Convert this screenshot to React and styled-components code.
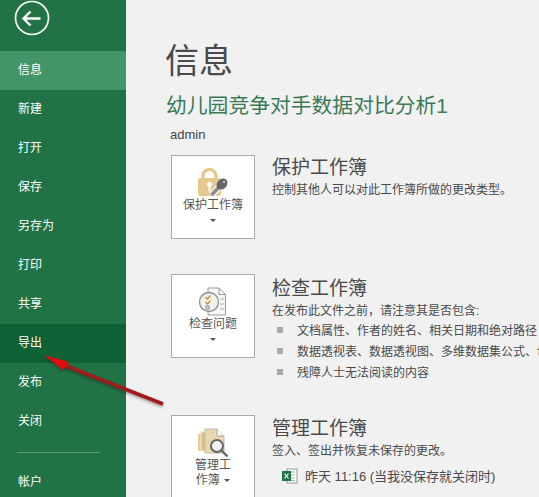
import React from 'react';
import styled, { createGlobalStyle } from 'styled-components';

const navItems = ['信息', '新建', '打开', '保存', '另存为', '打印', '共享', '导出', '发布', '关闭'];

const inspectItems = [
	'文档属性、作者的姓名、相关日期和绝对路径',
	'数据透视表、数据透视图、多维数据集公式、切片器',
	'残障人士无法阅读的内容',
];

function LockIcon() {
	return (
		<svg width="32" height="30" viewBox="0 0 32 30">
			<path d="M6 11V8a6.500 6.500 0 0 1 13 0v3" fill="none" stroke="#e3c588" strokeWidth="3.200" />
			<rect x="1" y="10" width="23" height="18" rx="2" fill="#e6c98f" />
			<circle cx="12.500" cy="16.500" r="2.400" fill="#fff" />
			<rect x="11.500" y="16.500" width="2" height="7" fill="#fff" />
			<path d="M23 18L14.500 27" stroke="#f4f4f4" strokeWidth="6.500" />
			<path d="M23 18L14.500 27" stroke="#8c8c8c" strokeWidth="3.600" />
			<ellipse cx="25" cy="16" rx="6" ry="4.800" transform="rotate(-45 25 16)" fill="#666" />
			<circle cx="27" cy="14" r="1" fill="#ddd" />
		</svg>
	);
}

function InspectIcon() {
	return (
		<svg width="30" height="30" viewBox="0 0 30 30">
			<path d="M10 1h11l6.500 6.500V28H10z" fill="#f7f7f7" stroke="#999" />
			<path d="M21 1v6.500h6.500" fill="none" stroke="#999" />
			<path d="M22 12h4M22 17h4M22 22h4" stroke="#aaa" />
			<circle cx="11" cy="15" r="9.500" fill="#f3f1ec" stroke="#8d8d8d" strokeWidth="1.300" />
			<path d="M7.500 10l2 2 3-3.500M7.500 15l2 2 3-3.500" fill="none" stroke="#c9893a" strokeWidth="1.200" />
			<rect x="8" y="19" width="3" height="3" fill="none" stroke="#888" />
		</svg>
	);
}

function ManageIcon() {
	return (
		<svg width="32" height="30" viewBox="0 0 32 30">
			<rect x="1" y="6" width="14" height="17" fill="#e6cf9f" />
			<rect x="4" y="4" width="14" height="19" fill="#dcc083" stroke="#f1e6cc" />
			<path d="M8 1h12l7 7v17H8z" fill="#ead7ad" stroke="#bbb" />
			<path d="M20 1v7h7" fill="#fafafa" stroke="#aaa" />
			<circle cx="20" cy="18" r="6" fill="#f4f4f4" stroke="#666" strokeWidth="2" />
			<path d="M24.500 22.500l6 6" stroke="#666" strokeWidth="2.400" />
		</svg>
	);
}

function ExcelIcon() {
	return (
		<svg width="16" height="16" viewBox="0 0 16 16">
			<rect x="5" y="1" width="10" height="14" fill="#fff" stroke="#9a9a9a" />
			<path d="M9 4h4M9 7h4M9 10h4M9 12.500h4" stroke="#9fb8a8" />
			<rect x="0" y="3" width="9" height="10" fill="#217346" />
			<path d="M2.500 5.500l4 5M6.500 5.500l-4 5" stroke="#fff" strokeWidth="1.200" />
		</svg>
	);
}

export default function App() {
	return (
		<Page>
			<GlobalStyle />
			<Sidebar>
				<BackButton aria-label="返回">
					<svg width="36" height="36" viewBox="0 0 36 36">
						<circle cx="18" cy="18" r="16.500" fill="none" stroke="#fff" strokeWidth="1.700" />
						<path
							d="M9.500 18.500H26.500M16.500 11.500L9.500 18.500L16.500 25.500"
							fill="none"
							stroke="#fff"
							strokeWidth="2.400"
						/>
					</svg>
				</BackButton>
				<NavList>
					{navItems.map(item => (
						<NavItem key={item} $active={item === '信息'} $hover={item === '导出'}>
							{item}
						</NavItem>
					))}
				</NavList>
				<Divider />
				<NavItem>帐户</NavItem>
			</Sidebar>
			<Main>
				<Title>信息</Title>
				<FileName>幼儿园竞争对手数据对比分析1</FileName>
				<Owner>admin</Owner>

				<Section $height={119}>
					<ActionCard>
						<IconSlot>
							<LockIcon />
						</IconSlot>
						<CardLabel>保护工作簿</CardLabel>
						<Caret />
					</ActionCard>
					<Details $top={1}>
						<Heading>保护工作簿</Heading>
						<Description>控制其他人可以对此工作簿所做的更改类型。</Description>
					</Details>
				</Section>

				<Section $height={141}>
					<ActionCard>
						<IconSlot>
							<InspectIcon />
						</IconSlot>
						<CardLabel>检查问题</CardLabel>
						<Caret />
					</ActionCard>
					<Details $top={3}>
						<Heading>检查工作簿</Heading>
						<Description>在发布此文件之前，请注意其是否包含:</Description>
						<BulletList>
							{inspectItems.map(item => (
								<Bullet key={item}>{item}</Bullet>
							))}
						</BulletList>
					</Details>
				</Section>

				<Section $height={84}>
					<ActionCard>
						<IconSlot>
							<ManageIcon />
						</IconSlot>
						<CardLabel>
							管理工
							<br />
							作簿 <InlineCaret />
						</CardLabel>
					</ActionCard>
					<Details $top={2}>
						<Heading>管理工作簿</Heading>
						<Description>签入、签出并恢复未保存的更改。</Description>
						<VersionRow>
							<ExcelIcon />
							昨天 11:16 (当我没保存就关闭时)
						</VersionRow>
					</Details>
				</Section>
			</Main>
			<Arrow width="130" height="60" viewBox="0 0 130 60">
				<defs>
					<filter id="arrowShadow" x="-10%" y="-30%" width="120%" height="170%">
						<feDropShadow dx="0" dy="1.500" stdDeviation="1.500" floodColor="#000" floodOpacity="0.400" />
					</filter>
				</defs>
				<g filter="url(#arrowShadow)">
					<path d="M121 52 L22 13" stroke="#9e1b1b" strokeWidth="3.500" />
					<path d="M2 3 L27 10 L21 18 Z" fill="#e01010" />
				</g>
			</Arrow>
		</Page>
	);
}

const GlobalStyle = createGlobalStyle`
	html, body {
		margin: 0;
		padding: 0;
		background: #f1f1f1;
	}
	body {
		font-family: 'Liberation Sans', 'Noto Sans CJK SC', sans-serif;
	}
`;

const Page = styled.div`
	position: relative;
	display: flex;
	width: 539px;
	height: 497px;
	overflow: hidden;
	background: #f1f1f1;
`;

const Sidebar = styled.nav`
	flex: 0 0 126px;
	background: #217346;
	color: #fff;
`;

const BackButton = styled.div`
	display: flex;
	height: 51px;
	padding: 0 0 0 14px;
	align-items: flex-start;
	box-sizing: border-box;
`;

const NavList = styled.div`
	display: flex;
	flex-direction: column;
`;

const NavItem = styled.div`
	height: 39px;
	padding-left: 18px;
	line-height: 39px;
	font-size: 12px;
	color: #fff;
	background: ${props => (props.$active ? '#439467' : props.$hover ? '#0f6136' : 'transparent')};
`;

const Divider = styled.div`
	width: 83px;
	height: 1px;
	margin: 11px 0 10px 17px;
	background: #5b9a77;
`;

const Main = styled.main`
	flex: 1;
	min-width: 0;
	padding: 40px 0 0 39px;
	white-space: nowrap;
`;

const Title = styled.h1`
	margin: 0;
	height: 45px;
	font-size: 34px;
	line-height: 43px;
	font-weight: 400;
	color: #4a4a4a;
`;

const FileName = styled.h2`
	margin: 8px 0 0 1px;
	height: 26px;
	font-size: 20.800px;
	line-height: 26px;
	font-weight: 400;
	color: #3a7a57;
`;

const Owner = styled.div`
	margin: 6px 0 0 5px;
	height: 20px;
	font-size: 13px;
	line-height: 20px;
	color: #444;
`;

const Section = styled.section`
	display: flex;
	gap: 17px;
	height: ${props => props.$height}px;
	margin: 0 0 0 6px;
	&:first-of-type {
		margin-top: 10px;
	}
`;

const ActionCard = styled.div`
	display: flex;
	flex-direction: column;
	align-items: center;
	flex: 0 0 82px;
	height: 70px;
	padding-top: 12px;
	background: #fff;
	border: 1px solid #ababab;
`;

const IconSlot = styled.div`
	display: flex;
	justify-content: center;
	height: 30px;
`;

const CardLabel = styled.div`
	font-size: 12px;
	line-height: 15px;
	color: #555;
	text-align: center;
`;

const Caret = styled.span`
	width: 0;
	height: 0;
	margin-top: 6px;
	border-left: 3px solid transparent;
	border-right: 3px solid transparent;
	border-top: 3px solid #555;
`;

const InlineCaret = styled(Caret)`
	display: inline-block;
	margin: 0 0 2px 1px;
`;

const Details = styled.div`
	display: flex;
	flex-direction: column;
	align-items: flex-start;
	padding-top: ${props => props.$top}px;
`;

const Heading = styled.h3`
	margin: 0;
	height: 27px;
	font-size: 19px;
	line-height: 24px;
	font-weight: 400;
	color: #4a4a4a;
`;

const Description = styled.p`
	margin: 0;
	font-size: 12px;
	line-height: 15px;
	color: #4a4a4a;
`;

const BulletList = styled.ul`
	margin: 0;
	padding: 0;
	list-style: none;
`;

const Bullet = styled.li`
	display: flex;
	align-items: center;
	height: 21px;
	font-size: 12px;
	color: #4a4a4a;
	&::before {
		content: '';
		width: 6px;
		height: 6px;
		margin: 0 14px 0 5px;
		background: #aaa;
	}
`;

const VersionRow = styled.div`
	display: flex;
	align-items: center;
	gap: 7px;
	margin: 7px 0 0 10px;
	font-size: 13px;
	color: #4a4a4a;
`;

const Arrow = styled.svg`
	position: absolute;
	left: 42px;
	top: 352px;
	pointer-events: none;
`;
